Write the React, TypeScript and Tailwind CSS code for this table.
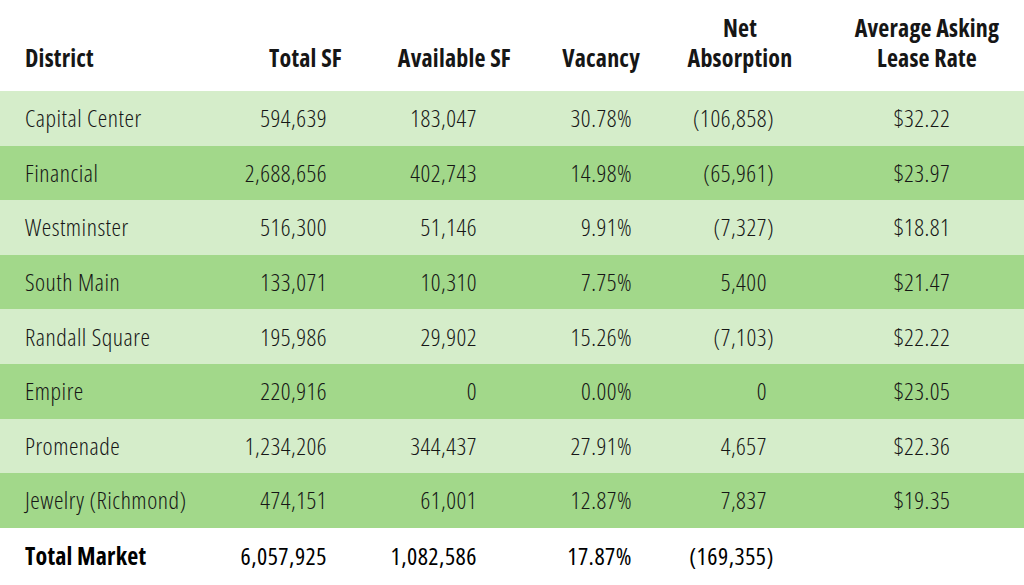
const rows = [
  { district: "Capital Center", total: "594,639", avail: "183,047", vacancy: "30.78%", net: "(106,858)", rate: "$32.22" },
  { district: "Financial", total: "2,688,656", avail: "402,743", vacancy: "14.98%", net: "(65,961)", rate: "$23.97" },
  { district: "Westminster", total: "516,300", avail: "51,146", vacancy: "9.91%", net: "(7,327)", rate: "$18.81" },
  { district: "South Main", total: "133,071", avail: "10,310", vacancy: "7.75%", net: "5,400", rate: "$21.47" },
  { district: "Randall Square", total: "195,986", avail: "29,902", vacancy: "15.26%", net: "(7,103)", rate: "$22.22" },
  { district: "Empire", total: "220,916", avail: "0", vacancy: "0.00%", net: "0", rate: "$23.05" },
  { district: "Promenade", total: "1,234,206", avail: "344,437", vacancy: "27.91%", net: "4,657", rate: "$22.36" },
  { district: "Jewelry (Richmond)", total: "474,151", avail: "61,001", vacancy: "12.87%", net: "7,837", rate: "$19.35" },
];

const cols = "grid grid-cols-[200px_150px_170px_130px_180px_194px] whitespace-nowrap";

// accounting style: closing paren hangs past the digits
function Net({ value }: { value: string }) {
  if (value.startsWith("(")) return <>{value}</>;
  return (
    <>
      {value}
      <span className="invisible">)</span>
    </>
  );
}

export default function App() {
  return (
    <div className="w-[1024px] h-[585px] bg-white text-[#161616] overflow-hidden font-['Open_Sans',sans-serif] [font-stretch:75%]">
      {/* header */}
      <div className={`${cols} h-[91px] items-end pb-[18px] font-bold text-[24px] leading-[30px] tracking-[0.2px]`}>
        <div className="pl-[25px]">District</div>
        <div className="text-right pr-[8px]">Total SF</div>
        <div className="text-right pr-[9px]">Available SF</div>
        <div className="text-right pr-[10px]">Vacancy</div>
        <div className="text-center">
          Net
          <br />
          Absorption
        </div>
        <div className="text-center">
          Average Asking
          <br />
          Lease Rate
        </div>
      </div>

      {/* body */}
      {rows.map((r, i) => (
        <div
          key={r.district}
          className={`${cols} h-[54.6px] items-center text-[24px] tracking-[0.5px] font-light ${i % 2 === 0 ? "bg-[#d5edca]" : "bg-[#a2d88a]"}`}
        >
          <div className="pl-[25px]">{r.district}</div>
          <div className="text-right pr-[23px]">{r.total}</div>
          <div className="text-right pr-[43px]">{r.avail}</div>
          <div className="text-right pr-[18px]">{r.vacancy}</div>
          <div className="text-right pr-[56px]">
            <Net value={r.net} />
          </div>
          <div className="text-center pr-[10px]">{r.rate}</div>
        </div>
      ))}

      {/* total */}
      <div className={`${cols} h-[57px] items-center text-[24px] tracking-[0.5px] text-black`}>
        <div className="pl-[25px] font-bold tracking-[0.2px]">Total Market</div>
        <div className="text-right pr-[23px]">6,057,925</div>
        <div className="text-right pr-[43px]">1,082,586</div>
        <div className="text-right pr-[18px]">17.87%</div>
        <div className="text-right pr-[56px]">(169,355)</div>
        <div />
      </div>
    </div>
  );
}
